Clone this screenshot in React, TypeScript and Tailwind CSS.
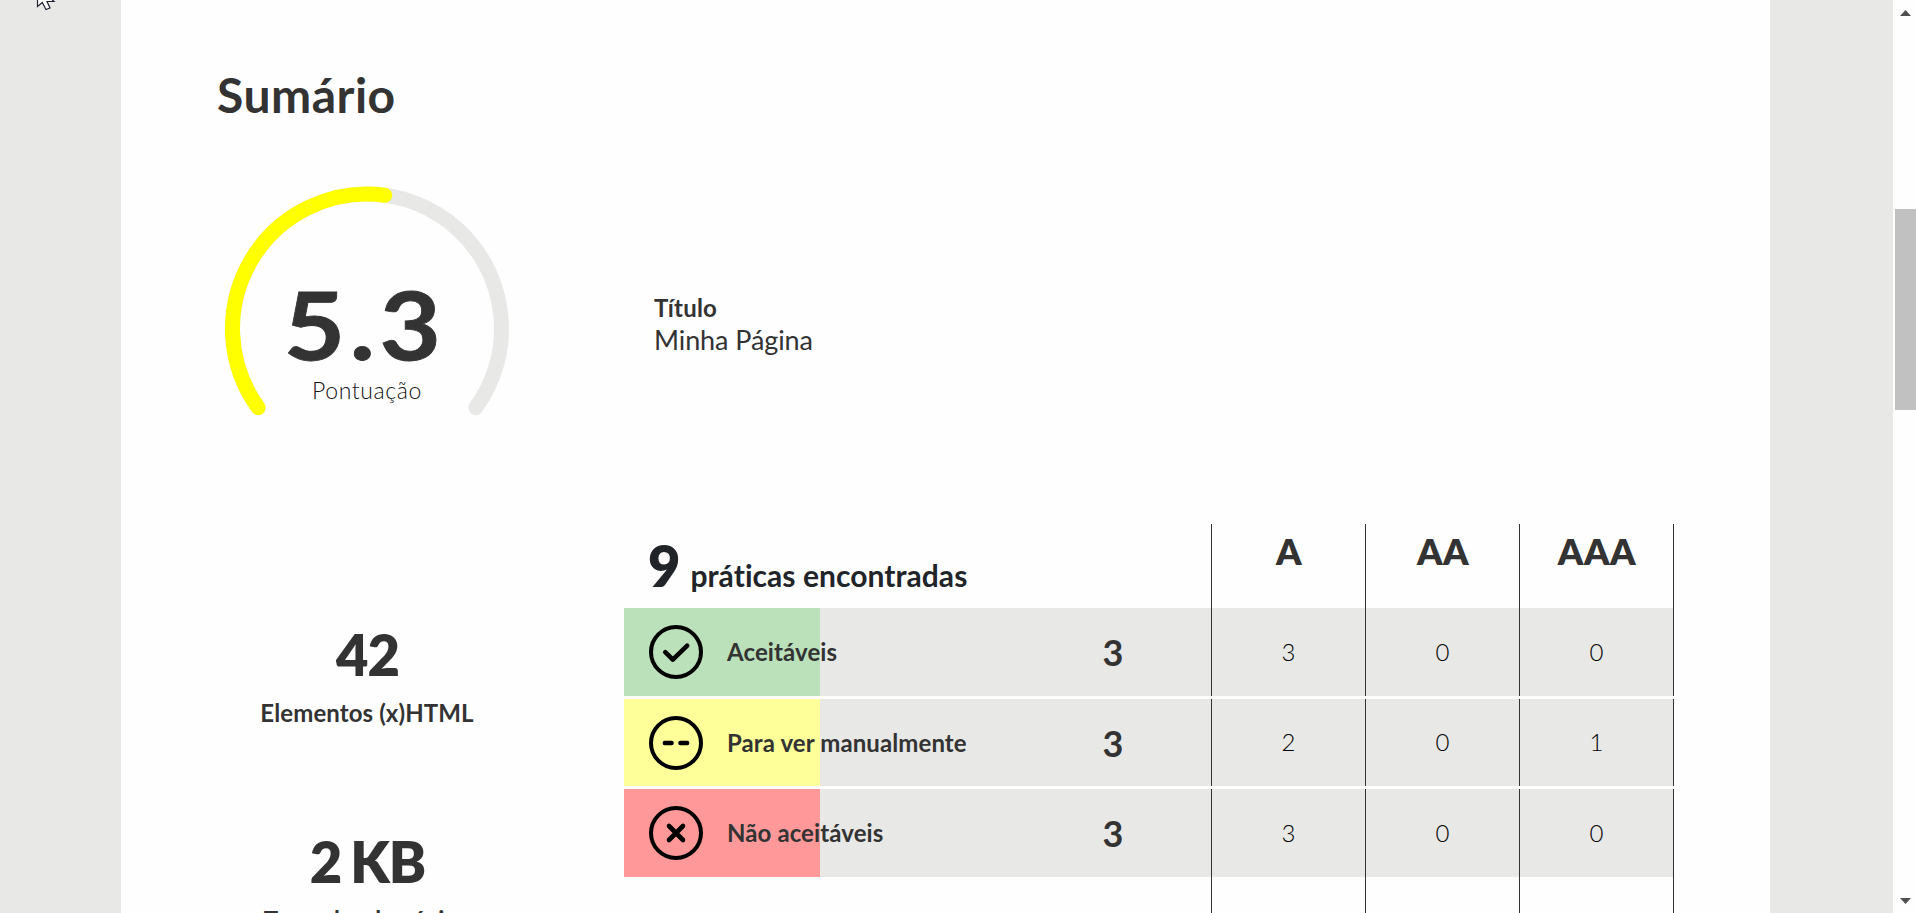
import React from "react";

type Row = {
  label: string;
  total: number;
  levels: number[];
  tint: string;
  height: string;
  icon: React.ReactNode;
};

const rows: Row[] = [
  {
    label: "Aceitáveis",
    total: 3,
    levels: [3, 0, 0],
    tint: "bg-[#bae1ba]",
    height: "h-[88px]",
    icon: <path d="M16.3 27.2 L23.8 34.6 L38.2 20.6" strokeWidth="4.6" />,
  },
  {
    label: "Para ver manualmente",
    total: 3,
    levels: [2, 0, 1],
    tint: "bg-[#ffff99]",
    height: "h-[87px]",
    icon: <path d="M15.8 27 H22.6 M31.4 27 H38.2" strokeWidth="4.4" />,
  },
  {
    label: "Não aceitáveis",
    total: 3,
    levels: [3, 0, 0],
    tint: "bg-[#ff9999]",
    height: "h-[88px]",
    icon: <path d="M20 20 L34 34 M34 20 L20 34" strokeWidth="4.6" />,
  },
];

function Gauge() {
  return (
    <div className="relative h-[232px] w-[300px]">
      <svg className="block h-[232px] w-[300px]" viewBox="217 185.4 300 232" fill="none" strokeLinecap="round">
        <path d="M258.19 407.06 A134.5 134.5 0 1 1 475.81 407.06" stroke="#e8e8e6" strokeWidth="15" />
        <path d="M258.19 407.06 A134.5 134.5 0 0 1 384.8 194.7" stroke="#ffff00" strokeWidth="15" />
      </svg>
      <div className="absolute inset-x-0 top-[92px] flex flex-col items-center">
        <div className="h-[93px] origin-center scale-x-114 pr-[4px] text-[93px] leading-[93px] font-bold tracking-[4px] [-webkit-text-stroke:0.8px_#333]">5.3</div>
        <div className="mt-[5px] h-[28px] text-[23px] leading-[28px] font-light tracking-[0.6px] text-[#111]">Pontuação</div>
      </div>
    </div>
  );
}

function Stat({ value, label }: { value: string; label: string }) {
  return (
    <div className="flex h-[207px] shrink-0 flex-col items-center">
      <div className="pl-px text-[56px] leading-[68px] font-extrabold tracking-[-1px] [word-spacing:-3px]">{value}</div>
      <div className="mt-[9px] text-[24px] leading-[29px] font-bold tracking-[0.1px] whitespace-nowrap">{label}</div>
    </div>
  );
}

function PracticesTable() {
  return (
    <div className="flex w-[1050px] flex-col">
      <div className="flex h-[84px]">
        <div className="flex w-[587px] items-baseline pt-[8px] pl-[24px] text-[#212529]">
          <span className="text-[56px] leading-[68px] font-extrabold">9</span>
          <span className="ml-[10px] text-[30px] font-bold tracking-[0.05px]">práticas encontradas</span>
        </div>
        <div className="flex w-[463px] border-l border-[#333]">
          {["A", "AA", "AAA"].map((level) => (
            <div key={level} className="w-[154px] border-r border-[#333] pt-[5px] pl-px text-center text-[36px] leading-[44px] font-extrabold tracking-[0.5px]">
              {level}
            </div>
          ))}
        </div>
      </div>
      <div className="flex flex-col gap-[3px]">
        {rows.map((row) => (
          <div key={row.label} className={`flex ${row.height}`}>
            <div className="flex w-[587px] bg-[#e8e8e6]">
              <div className={`flex w-[196px] items-center pl-[25px] whitespace-nowrap ${row.tint}`}>
                <svg className="h-[54px] w-[54px] shrink-0" viewBox="0 0 54 54" fill="none" stroke="#000" strokeLinecap="round" strokeLinejoin="round">
                  <circle cx="27" cy="27" r="25" strokeWidth="4" />
                  {row.icon}
                </svg>
                <span className="ml-[24px] text-[24px] leading-[28px] font-bold tracking-[0.1px]">{row.label}</span>
              </div>
              <div className="ml-[195px] flex w-[196px] items-center justify-center text-[36px] font-bold">
                <span>{row.total}</span>
              </div>
            </div>
            <div className="flex w-[463px] border-l border-[#333] bg-[#e8e8e6]">
              {row.levels.map((n, i) => (
                <div key={i} className="flex w-[154px] items-center justify-center border-r border-[#333] pb-px text-[24px] font-light text-black">
                  {n}
                </div>
              ))}
            </div>
          </div>
        ))}
      </div>
      <div className="flex h-[36px] pl-[587px]">
        <div className="flex w-[463px] border-l border-[#333]">
          <div className="w-[154px] border-r border-[#333]" />
          <div className="w-[154px] border-r border-[#333]" />
          <div className="w-[154px] border-r border-[#333]" />
        </div>
      </div>
    </div>
  );
}

function Scrollbar() {
  return (
    <div className="flex w-[23px] flex-col items-end bg-[#fefefe]">
      <svg className="h-[209px] w-[21px] shrink-0" viewBox="0 0 21 209" fill="#505050">
        <path d="M5 16 L10.5 10 L16 16 Z" />
      </svg>
      <div className="h-[201px] w-[21px] shrink-0 bg-[#c1c1c1]" />
      <svg className="h-[503px] w-[21px] shrink-0" viewBox="0 0 21 503" fill="#505050">
        <path d="M5 488 L10.5 494 L16 488 Z" />
      </svg>
    </div>
  );
}

export default function App() {
  return (
    <div className="relative flex h-[913px] w-[1916px] overflow-hidden bg-[#e8e8e6] font-['Lato',sans-serif] text-[#333] [font-variant-ligatures:none]">
      <main className="ml-[121px] mr-[123px] flex w-[1649px] shrink-0 flex-col bg-[#fefefe] pl-[96px]">
        <h1 className="mt-[66px] text-[48px] leading-[58px] font-bold tracking-[0.5px]">Sumário</h1>
        <div className="mt-[62px] flex h-[232px]">
          <Gauge />
          <div className="pt-[107px] pl-[137px]">
            <div className="text-[24px] leading-[30px] font-bold tracking-[0.2px]">Título</div>
            <div className="text-[27px] leading-[34px] tracking-[-0.1px]">Minha Página</div>
          </div>
        </div>
        <div className="mt-[106px] flex h-[389px]">
          <div className="w-[300px] pt-[97px]">
            <Stat value="42" label="Elementos (x)HTML" />
            <Stat value="2 KB" label="Tamanho da página" />
          </div>
          <div className="ml-[107px]">
            <PracticesTable />
          </div>
        </div>
      </main>
      <Scrollbar />
      <svg className="absolute top-0 left-[36px] h-[11px] w-[20px]" viewBox="0 0 20 11" fill="#fff" stroke="#222233" strokeWidth="1.2">
        <path d="M1.5 -14 V6.5 L6.3 2.5 L10 9.5 L14 8 L11 1.5 H18 Z" />
      </svg>
    </div>
  );
}
